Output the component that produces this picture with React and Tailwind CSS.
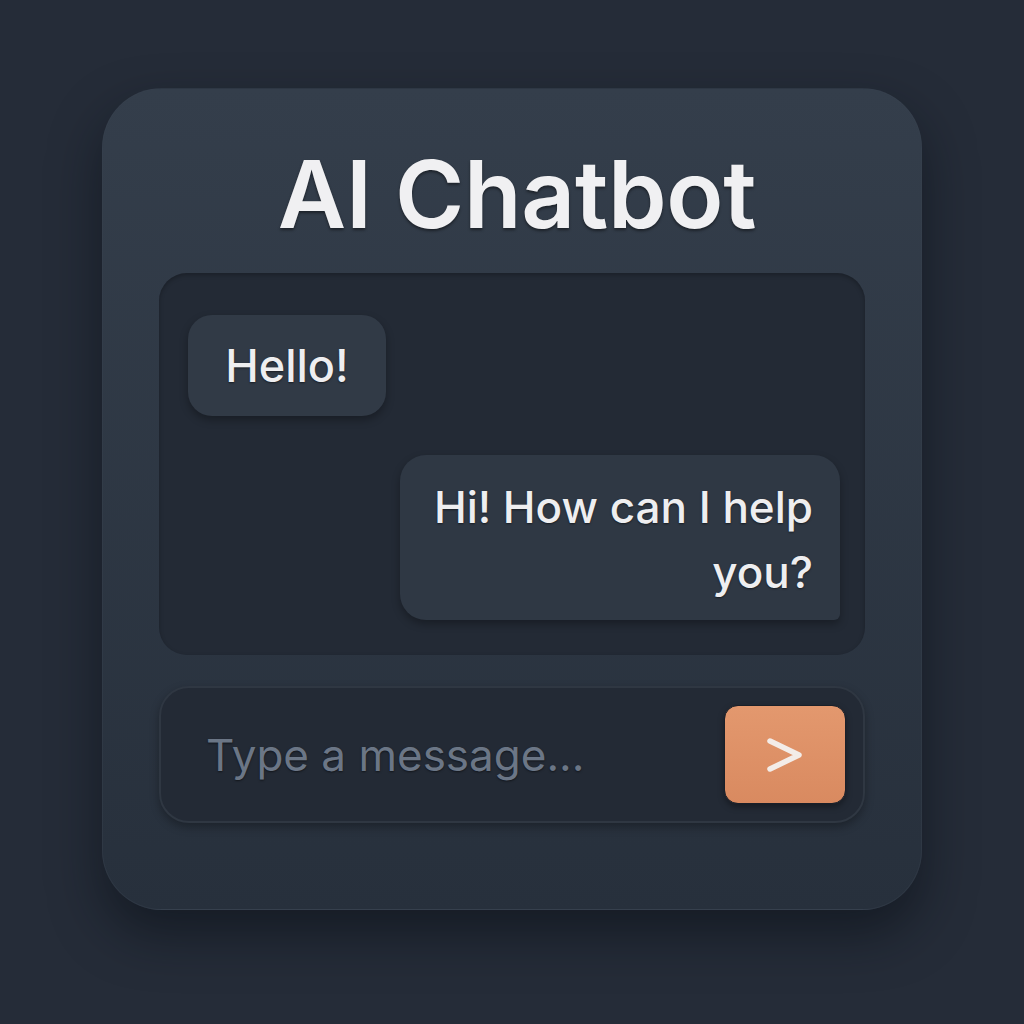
export default function App() {
  return (
    <div
      className="w-[1024px] h-[1024px] bg-[#252c38] flex justify-center pt-[88px]"
      style={{ fontFamily: "Inter, 'Noto Sans', sans-serif" }}
    >
      <div className="w-[820px] h-[822px] rounded-[60px] bg-gradient-to-b from-[#343e4b] to-[#27303c] shadow-[0_24px_50px_rgba(10,14,22,0.55)] border border-[#3a4350]/40 px-[56px] pt-[59px] flex flex-col">
        <h1 className="pl-[10px] text-center text-[94px] leading-[92px] font-semibold text-[#f0f0f2] tracking-[-0.3px] [text-shadow:0_2px_3px_rgba(0,0,0,0.45)]">
          AI Chatbot
        </h1>
        <div className="mt-[33px] h-[382px] rounded-[28px] bg-[#232a35] shadow-[inset_0_2px_4px_rgba(0,0,0,0.25)] pt-[42px] pl-[29px] pr-[25px] flex flex-col">
          <div className="self-start h-[101px] w-[198px] rounded-[24px] bg-[#313a46] shadow-[0_4px_8px_rgba(0,0,0,0.3)] flex items-center justify-center">
            <span className="text-[45px] leading-none font-medium text-[#eeeef0] [text-shadow:0_1px_2px_rgba(0,0,0,0.5)]">
              Hello!
            </span>
          </div>
          <div className="self-end mt-[39px] w-[440px] h-[165px] rounded-[26px] rounded-br-[6px] bg-[#2f3844] shadow-[0_4px_8px_rgba(0,0,0,0.3)] pl-[20px] pr-[27px] pt-[20px] text-right">
            <p className="text-[44px] leading-[65px] font-medium text-[#eeeef0] whitespace-nowrap [text-shadow:0_1px_2px_rgba(0,0,0,0.5)]">
              Hi! How can I help
              <br />
              you?
            </p>
          </div>
        </div>
        <div className="mt-[31px] h-[137px] rounded-[30px] bg-[#232a35] border-2 border-[#2f3742] shadow-[0_4px_10px_rgba(0,0,0,0.3)] flex items-center justify-between pl-[45px] pr-[17px]">
          <span className="text-[44px] font-normal text-[#6b7686] [text-shadow:0_1px_2px_rgba(0,0,0,0.5)]">
            Type a message...
          </span>
          <button className="w-[122px] h-[99px] rounded-[14px] bg-gradient-to-b from-[#e3986e] to-[#d98a60] border border-[#1a1f28] shadow-[0_3px_6px_rgba(0,0,0,0.35)] flex items-center justify-center">
            <svg width="40" height="38" viewBox="0 0 40 38" fill="none">
              <path
                d="M5 5 L34 19 L5 33"
                stroke="#f3ece8"
                strokeWidth="5.5"
                strokeLinecap="round"
                strokeLinejoin="round"
              />
            </svg>
          </button>
        </div>
      </div>
    </div>
  );
}
